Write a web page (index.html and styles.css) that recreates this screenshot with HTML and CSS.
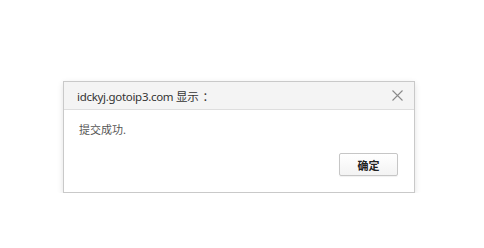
FILE: index.html
```html
<!DOCTYPE html>
<html lang="zh-CN">
<head>
    <meta charset="UTF-8">
    <meta name="viewport" content="width=device-width, initial-scale=1.0">
    <title>提示</title>
    <link rel="stylesheet" href="styles.css">
</head>
<body>
    <div class="dialog">
        <div class="dialog-header">
            <span class="dialog-title">idckyj.gotoip3.com 显示<span class="colon">：</span></span>
            <span class="dialog-close">
                <svg width="11" height="11" viewBox="0 0 11 11">
                    <path d="M0.5 0.5 L10.5 10.5 M10.5 0.5 L0.5 10.5" stroke="#8a8a8a" stroke-width="1.1" fill="none"/>
                </svg>
            </span>
        </div>
        <div class="dialog-body">
            <p class="message">提交成功.</p>
            <div class="actions">
                <button class="ok-btn">确定</button>
            </div>
        </div>
    </div>
</body>
</html>
```

FILE: styles.css
```css
body {
    margin: 0;
    padding: 81px 0 0 63px;
    background-color: #fff;
    font-family: "Noto Sans", "Noto Sans CJK SC", sans-serif;
}

.dialog {
    width: 350px;
    border: 1px solid #c9c9c9;
    background-color: #fff;
    box-shadow: 0 2px 6px rgba(0,0,0,0.12);
}

.dialog-header {
    height: 27px;
    display: flex;
    align-items: center;
    justify-content: space-between;
    padding: 0 10px 0 13px;
    background-color: #f4f4f4;
    border-bottom: 1px solid #dedede;
}

.dialog-title {
    font-size: 11.5px;
    letter-spacing: -0.3px;
    color: #333;
}

.colon {
    margin-left: 4px;
}

.dialog-close {
    display: flex;
    margin-right: 1px;
}

.dialog-body {
    padding: 12px 16px 16px 15px;
}

.message {
    margin: 0;
    font-size: 11px;
    color: #555;
    line-height: 16px;
}

.actions {
    display: flex;
    justify-content: flex-end;
    margin-top: 15px;
}

.ok-btn {
    width: 59px;
    height: 23px;
    padding: 0;
    font-family: "Noto Sans CJK SC", sans-serif;
    font-size: 11px;
    font-weight: bold;
    color: #222;
    background: linear-gradient(#fff, #f3f3f3);
    border: 1px solid #c6c6c6;
    border-radius: 2px;
    box-shadow: 0 1px 1px rgba(0,0,0,0.06);
}
```
